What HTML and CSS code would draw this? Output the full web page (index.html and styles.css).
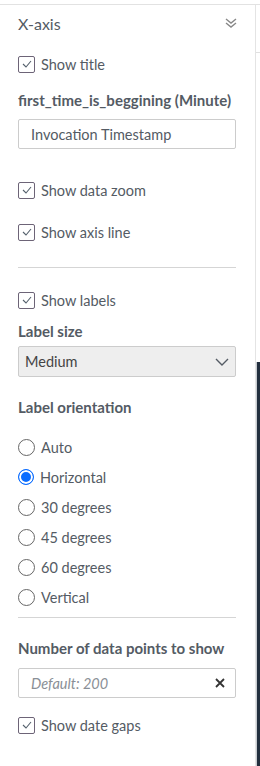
FILE: index.html
```html
<!DOCTYPE html>
<html lang="en">
<head>
    <meta charset="UTF-8">
    <title>X-axis</title>
    <link rel="stylesheet" href="styles.css">
</head>
<body>
<div class="frame">
<div class="panel">
    <div class="head">
        <span class="title">X-axis</span>
        <svg class="chev" width="12" height="10" viewBox="0 0 12 10"><path d="M1 1l5 4 5-4M1 5l5 4 5-4" fill="none" stroke="#888" stroke-width="1.4"/></svg>
    </div>

    <label class="check first"><span class="box"><svg width="10" height="8" viewBox="0 0 10 8"><path d="M1 4l3 3 5-6" fill="none" stroke="#54606c" stroke-width="1.1"/></svg></span>Show title</label>

    <div class="label name">first_time_is_beggining (Minute)</div>
    <div class="input">Invocation Timestamp</div>

    <label class="check zoom"><span class="box"><svg width="10" height="8" viewBox="0 0 10 8"><path d="M1 4l3 3 5-6" fill="none" stroke="#54606c" stroke-width="1.1"/></svg></span>Show data zoom</label>
    <label class="check axis"><span class="box"><svg width="10" height="8" viewBox="0 0 10 8"><path d="M1 4l3 3 5-6" fill="none" stroke="#54606c" stroke-width="1.1"/></svg></span>Show axis line</label>

    <hr class="div one">

    <label class="check labels"><span class="box"><svg width="10" height="8" viewBox="0 0 10 8"><path d="M1 4l3 3 5-6" fill="none" stroke="#54606c" stroke-width="1.1"/></svg></span>Show labels</label>

    <div class="label size">Label size</div>
    <div class="select">Medium
        <svg width="14" height="8" viewBox="0 0 14 8"><path d="M1 1l6 6 6-6" fill="none" stroke="#545b64" stroke-width="1.4"/></svg>
    </div>

    <div class="label orient">Label orientation</div>
    <div class="radios">
        <label class="radio"><span class="dot"></span>Auto</label>
        <label class="radio on"><span class="dot"></span>Horizontal</label>
        <label class="radio"><span class="dot"></span>30 degrees</label>
        <label class="radio"><span class="dot"></span>45 degrees</label>
        <label class="radio"><span class="dot"></span>60 degrees</label>
        <label class="radio"><span class="dot"></span>Vertical</label>
    </div>

    <hr class="div two">

    <div class="label points">Number of data points to show</div>
    <div class="input ph">Default: 200
        <svg width="10" height="10" viewBox="0 0 10 10"><path d="M1 1l8 8M9 1l-8 8" stroke="#333" stroke-width="1.8"/></svg>
    </div>

    <label class="check gaps"><span class="box"><svg width="10" height="8" viewBox="0 0 10 8"><path d="M1 4l3 3 5-6" fill="none" stroke="#54606c" stroke-width="1.1"/></svg></span>Show date gaps</label>
</div>
<div class="side">
    <div class="side-top"></div>
    <div class="side-mid"></div>
    <div class="side-dark"></div>
</div>
</div>
</body>
</html>
```

FILE: styles.css
```css
body { margin: 0; font-family: "Lato", "Noto Sans", sans-serif; color: #545b64; background: #fff; }
.frame { display: flex; border-top: 1px solid #e2e2e2; margin-top: 4px; height: 761px; }
.panel { width: 256px; border-right: 1px solid #e4e4e4; box-sizing: border-box; padding: 0 19px 0 18px; }
.side { flex: 1; display: flex; flex-direction: column; }
.side-top { height: 47px; border-bottom: 1px solid #e0e0e0; }
.side-mid { height: 309px; }
.side-dark { flex: 1; background: #232f3e; border-left: 1px solid #c8ccd0; }

.head { display: flex; justify-content: space-between; align-items: center; height: 36px; }
.title { font-size: 16px; }
.chev { margin-right: -1px; }

.check { display: flex; align-items: center; font-size: 14.5px; height: 20px; }
.box { width: 15px; height: 15px; border: 1px solid #6d6477; border-radius: 2px; display: flex; align-items: center; justify-content: center; margin-right: 6px; }
.first { margin-top: 13px; }
.zoom { margin-top: 31px; }
.axis { margin-top: 22px; }
.labels { margin-top: 22px; }
.gaps { margin-top: 17px; }

.label { font-size: 15px; font-weight: bold; height: 20px; line-height: 20px; }
.name { margin-top: 16px; }
.size { margin-top: 11px; }
.orient { margin-top: 20px; }
.points { margin-top: 20px; }

.input { border: 1px solid #ccc; border-radius: 2px; height: 30px; box-sizing: border-box; margin-top: 9px; padding: 0 12px; font-size: 14.5px; display: flex; align-items: center; justify-content: space-between; }
.ph { font-style: italic; color: #8a8f96; margin-top: 10px; padding-right: 10px; }

.select { background: #eee; border: 1px solid #ccc; border-radius: 2px; height: 31px; box-sizing: border-box; margin-top: 5px; padding: 0 6px 0 6px; font-size: 14.5px; display: flex; align-items: center; justify-content: space-between; color: #444; }

.div { border: 0; border-top: 1px solid #d5d5d5; margin: 0; }
.one { margin-top: 25px; }
.two { margin-top: 10px; }

.radios { margin-top: 20px; display: flex; flex-direction: column; gap: 10px; }
.radio { display: flex; align-items: center; font-size: 14.5px; height: 20px; }
.dot { width: 15px; height: 15px; border: 1px solid #666; border-radius: 50%; margin-right: 6px; box-sizing: content-box; }
.on .dot { border-color: #0b6dff; background: #0b6dff; box-shadow: inset 0 0 0 2px #fff; border-width: 1.5px; width: 14px; height: 14px; }
```
